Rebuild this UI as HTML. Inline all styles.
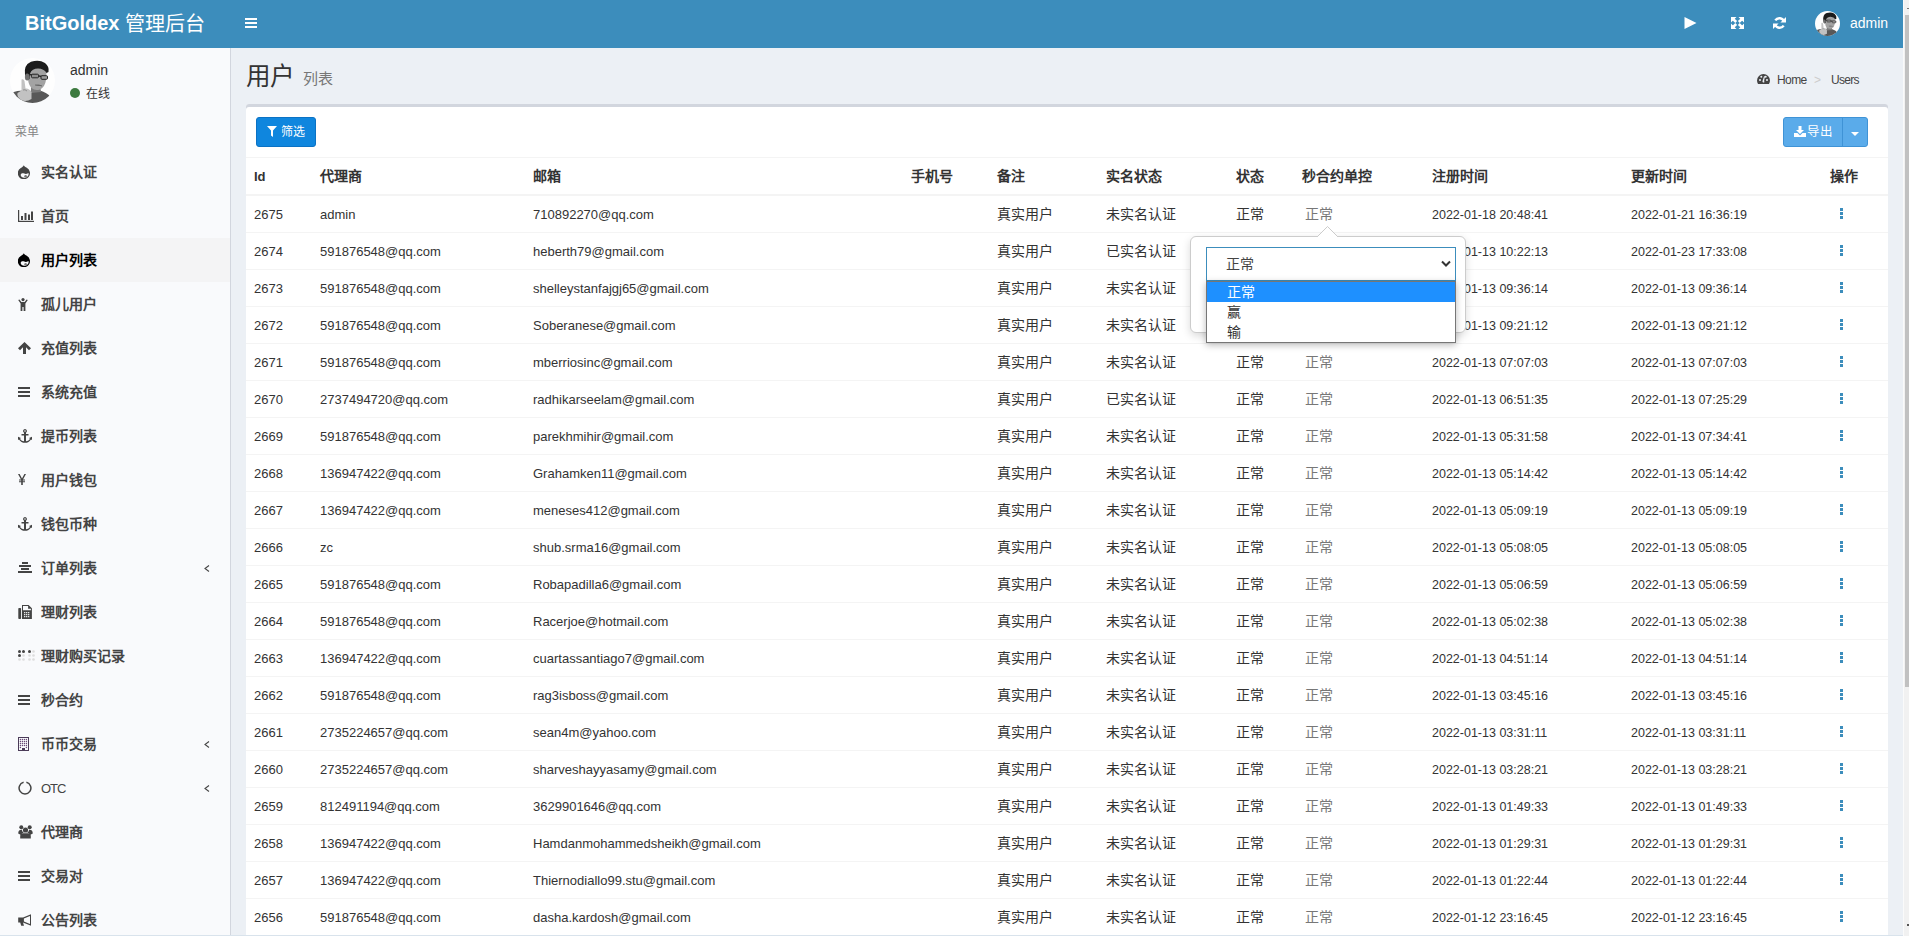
<!DOCTYPE html>
<html lang="zh-CN"><head><meta charset="utf-8"><title>BitGoldex 管理后台</title>
<style>
*{box-sizing:border-box}
html,body{margin:0;padding:0}
body{width:1909px;height:936px;overflow:hidden;position:relative;background:#ecf0f5;font-family:"Liberation Sans",sans-serif;color:#333}
.a{position:absolute}
svg{position:absolute;display:block}
#hdr{position:absolute;left:0;top:0;width:1903px;height:48px;background:#3c8dbc;color:#fff}
#logo{position:absolute;left:25px;top:11px;font-size:20px;line-height:24px;white-space:nowrap}
#logo b{font-weight:bold}
#logo i{font-style:normal;position:relative;top:1px}
#sb{position:absolute;left:0;top:48px;width:231px;height:888px;background:#f9fafc;border-right:1px solid #d2d6de}
.mi{position:absolute;left:0;width:230px;height:44px}
.mi.on{background:#f4f4f5}
.mi.on .t{color:#000}.mi.on svg{fill:#000}
.mi .t{position:absolute;left:41px;top:0;line-height:44px;font-size:14px;font-weight:bold;color:#444;white-space:nowrap}
.mi svg{fill:#444}
#box{position:absolute;left:246px;top:104px;width:1642px;height:840px;background:#fff;border-radius:3px 3px 0 0;box-shadow:inset 0 3px 0 #d2d6de}
.tr{position:absolute;left:0;width:1642px;height:37px;border-top:1px solid #f4f4f4}
.tr span{position:absolute;top:0;white-space:nowrap}
.l{font-size:13px;line-height:36px;color:#333;margin-top:1px}
.z{font-size:14px;line-height:36px;color:#333}
.g{color:#777 !important}
.d{font-size:12.5px}
.th{position:absolute;top:0;font-size:14px;font-weight:bold;line-height:37px;color:#333;white-space:nowrap}
.ev{position:absolute;left:1594px;top:12px;width:3px;height:11px}
.ev:before,.ev:after,.ev b{content:"";position:absolute;left:0;width:3px;height:3px;background:#3c8dbc}
.ev:before{top:0}.ev:after{top:8px}
.ev{background:linear-gradient(#3c8dbc,#3c8dbc) 0 4px/3px 3px no-repeat}
#scr{position:absolute;left:1903px;top:0;width:6px;height:936px;background:#f1f1f1;border-left:1px solid #fafafa}
#thumb{position:absolute;left:1905px;top:15px;width:4px;height:672px;background:#c1c1c1}
</style></head><body>

<!-- header -->
<div id="hdr">
  <div id="logo"><b>BitGoldex</b> <i>管理后台</i></div>
  <svg style="left:245px;top:17px" width="12" height="12" viewBox="0 0 12 12"><rect x="0" y="1" width="12" height="2" fill="#fff"/><rect x="0" y="5" width="12" height="2" fill="#fff"/><rect x="0" y="9" width="12" height="2" fill="#fff"/></svg>
  <svg style="left:1684px;top:17px" width="13" height="12" viewBox="0 0 13 12"><path d="M0.5 0 L12.5 6 L0.5 12 Z" fill="#fff"/></svg>
  <svg style="left:1731px;top:17px" width="13" height="12" viewBox="0 0 13 12" fill="#fff"><path d="M0 0h5.5L0 5.5z M13 0v5.5L7.5 0z M0 12V6.5L5.5 12z M13 12H7.5L13 6.5z"/><path d="M1.5 1.5L5.2 5M11.5 1.5L7.8 5M1.5 10.5L5.2 7M11.5 10.5L7.8 7" stroke="#fff" stroke-width="2.6"/></svg>
  <svg style="left:1773px;top:17px" width="13" height="12" viewBox="0 0 13 12" fill="none" stroke="#fff" stroke-width="2.4"><path d="M11 4.6A4.9 4.9 0 0 0 2.3 3.4"/><path d="M2 7.4A4.9 4.9 0 0 0 10.7 8.6"/><path d="M13 0v5.6H7.4z" fill="#fff" stroke="none"/><path d="M0 12V6.4h5.6z" fill="#fff" stroke="none"/></svg>
  <svg style="left:1815px;top:11px" width="25" height="25" viewBox="0 0 45 45"><use href="#avatar"/></svg>
  <div class="a" style="left:1850px;top:14px;font-size:14px;line-height:18px;color:#fff">admin</div>
</div>
<div id="scr"></div><div id="thumb"></div><div class="a" style="left:1907px;top:8px;width:2px;height:1px;background:#777"></div><div class="a" style="left:1907px;top:924px;width:2px;height:2px;background:#555"></div>

<svg width="0" height="0" style="position:absolute">
 <defs>
  <clipPath id="cc"><circle cx="22.5" cy="22.5" r="22.5"/></clipPath>
  <g id="avatar">
   <g clip-path="url(#cc)">
    <rect width="45" height="45" fill="#fefefe"/>
    <path d="M2 34.5 Q10 31.5 19 33 L30 32.5 Q37 34.5 41 39 L42 45 L2 45Z" fill="#585858"/>
    <path d="M21 27 L30 27 L31 34 L21 35Z" fill="#7a7a7a"/>
    <path d="M18 12 Q19 8 26 8.5 Q35 9 36.5 15 L36 22 Q35 29 30 31.5 Q25 33 21.5 30 Q18.5 27 18 21Z" fill="#a3a3a3"/>
    <path d="M15 17 Q13.5 7 21 3.8 Q29 1 35 5 Q39.5 8.5 38.5 14 L36.5 15 Q34 10.5 28 10.5 Q22 10.5 20 15.5 L19.5 21 L16.5 22Z" fill="#1c1c1c"/>
    <ellipse cx="17.2" cy="19" rx="2.3" ry="3.6" fill="#707070"/>
    <path d="M19.5 16.5 L38 19.5" stroke="#2a2a2a" stroke-width="1.6"/>
    <rect x="21.5" y="16.2" width="7" height="3.6" rx="1" fill="#8f8f8f" stroke="#262626" stroke-width="1"/>
    <rect x="31" y="17.7" width="6.5" height="3.6" rx="1" fill="#9a9a9a" stroke="#262626" stroke-width="1"/>
    <path d="M25 27 Q29 26.5 32 28" stroke="#6a6a6a" stroke-width="1"/>
    <path d="M11.5 21.5 Q13.5 20.5 14.5 23 L15.5 30.5 Q19 30 21.5 34 L21.5 41 Q16 44.5 11 42 Q6.5 38.5 7.5 35 L11.5 32.5 Z" fill="#c2c2c2"/>
    <path d="M13 32 Q15 31 17 33" stroke="#8a8a8a" stroke-width="0.9" fill="none"/>
   </g>
  </g>
  <g id="drupal"><path d="M5.8 0.2 C6.2 1.5 7.6 2.1 8.8 2.8 A6.1 6.1 0 1 1 2.8 2.9 C4 2.2 5.4 1.5 5.8 0.2Z"/><path d="M2.7 10.3 C2.6 8.4 4.6 7.9 6.3 8.6 C7.7 9.2 8.8 8.8 10.5 8 C11 9.6 10.3 11.6 8.2 12.4 C6 13.2 2.9 12.7 2.7 10.3Z" fill="#f9fafc"/><circle cx="7.6" cy="11.3" r="1.3" fill="#777"/></g>
  <g id="bars"><rect x="0" y="0" width="12" height="2"/><rect x="0" y="4" width="12" height="2"/><rect x="0" y="8" width="12" height="2"/></g>
  <g id="anchor"><path d="M7 0a2 2 0 0 1 1 3.7V5h2.5v1.5H8V12.3c1.8-.2 3.3-1.2 4-2.6L11 9l3-1.2V11l-1-.6C11.8 12.4 9.6 13.8 7 13.8S2.2 12.4 1 10.4L0 11V7.8L3 9l-1 .7c.7 1.4 2.2 2.4 4 2.6V6.5H3.5V5H6V3.7A2 2 0 0 1 7 0zm0 1.2a.8.8 0 1 0 0 1.6.8.8 0 0 0 0-1.6z"/></g>
  <g id="angle"><path d="M5 0.5 L1 3.5 L5 6.5" fill="none" stroke="#444" stroke-width="1.1"/></g>
 </defs>
</svg>

<!-- sidebar -->
<div id="sb">
  <svg style="left:10px;top:10px" width="45" height="45" viewBox="0 0 45 45"><use href="#avatar"/></svg>
  <div class="a" style="left:70px;top:13px;font-size:14px;line-height:18px;color:#333">admin</div>
  <div class="a" style="left:70px;top:40px;width:10px;height:10px;border-radius:50%;background:#3d7a3f"></div>
  <div class="a" style="left:86px;top:37px;font-size:12px;line-height:18px;color:#333">在线</div>
  <div class="a" style="left:15px;top:75px;font-size:12px;line-height:18px;color:#848484">菜单</div>
<div class="mi" style="top:102px"><svg style="left:18px;top:15px" width="13" height="14" viewBox="0 0 13 14"><use href="#drupal"/></svg><span class="t">实名认证</span></div>
<div class="mi" style="top:146px"><svg style="left:18px;top:16px" width="16" height="12" viewBox="0 0 16 12"><rect x="0" y="0" width="1.2" height="12"/><rect x="0" y="10.8" width="16" height="1.2"/><rect x="3" y="6" width="2" height="4"/><rect x="6.5" y="3" width="2" height="7"/><rect x="10" y="4.5" width="2" height="5.5"/><rect x="13" y="1.5" width="2" height="8.5"/></svg><span class="t">首页</span></div>
<div class="mi on" style="top:190px"><svg style="left:18px;top:15px" width="13" height="14" viewBox="0 0 13 14"><use href="#drupal"/></svg><span class="t">用户列表</span></div>
<div class="mi" style="top:234px"><svg style="left:18px;top:16px" width="10" height="13" viewBox="0 0 10 13"><circle cx="5" cy="1.6" r="1.6"/><path d="M0.2 2 L1.4 1.4 L3.4 4 H6.6 L8.6 1.4 L9.8 2 L7.4 5.4 V13 H5.6 V9 H4.4 V13 H2.6 V5.4Z"/></svg><span class="t">孤儿用户</span></div>
<div class="mi" style="top:278px"><svg style="left:18px;top:16px" width="13" height="12" viewBox="0 0 13 12"><path d="M6.5 0 L13 6.2 L11 8.2 L8 5.3 V12 H5 V5.3 L2 8.2 L0 6.2Z"/></svg><span class="t">充值列表</span></div>
<div class="mi" style="top:322px"><svg style="left:18px;top:17px" width="12" height="10" viewBox="0 0 12 10"><use href="#bars"/></svg><span class="t">系统充值</span></div>
<div class="mi" style="top:366px"><svg style="left:18px;top:15px" width="14" height="14" viewBox="0 0 14 14"><use href="#anchor"/></svg><span class="t">提币列表</span></div>
<div class="mi" style="top:410px"><svg style="left:18px;top:16px" width="8" height="11" viewBox="0 0 8 11"><path d="M0 0 H1.6 L4 4.6 L6.4 0 H8 L5 5.5 H7 V6.5 H4.8 V7.3 H7 V8.3 H4.8 V11 H3.2 V8.3 H1 V7.3 H3.2 V6.5 H1 V5.5 H3Z"/></svg><span class="t">用户钱包</span></div>
<div class="mi" style="top:454px"><svg style="left:18px;top:15px" width="14" height="14" viewBox="0 0 14 14"><use href="#anchor"/></svg><span class="t">钱包币种</span></div>
<div class="mi" style="top:498px"><svg style="left:18px;top:16px" width="14" height="11" viewBox="0 0 14 11"><rect x="4" y="0" width="6" height="2"/><rect x="1" y="3" width="12" height="2"/><rect x="3" y="6" width="8" height="2"/><rect x="0" y="9" width="14" height="2"/></svg><span class="t">订单列表</span><svg style="left:204px;top:19px" width="6" height="7" viewBox="0 0 6 7"><use href="#angle"/></svg></div>
<div class="mi" style="top:542px"><svg style="left:18px;top:15px" width="14" height="14" viewBox="0 0 14 14"><rect x="0.3" y="3" width="2.8" height="11" rx="0.8"/><path fill-rule="evenodd" d="M4 0 H10.6 L13.9 3.3 V14 H4 Z M5 1 V5.2 H12.9 V3.8 H10.1 V1Z M6.1 7.1 V8.3 H7.3 V7.1Z M8.1 7.1 V8.3 H9.3 V7.1Z M10.1 7.1 V8.3 H11.3 V7.1Z M6.1 9.1 V10.3 H7.3 V9.1Z M8.1 9.1 V10.3 H9.3 V9.1Z M10.1 9.1 V10.3 H11.3 V9.1Z M6.1 11.1 V12.3 H7.3 V11.1Z M8.1 11.1 V12.3 H9.3 V11.1Z M10.1 11.1 V12.3 H11.3 V11.1Z"/></svg><span class="t">理财列表</span></div>
<div class="mi" style="top:586px"><svg style="left:18px;top:15px" width="17" height="13" viewBox="0 0 17 13"><circle cx="1.5" cy="2.5" r="1.5"/><circle cx="5.5" cy="2.5" r="1.5"/><circle cx="11.5" cy="2.5" r="1.5"/><circle cx="1.5" cy="6.5" r="1.5"/><g fill="#ddd"><circle cx="15.5" cy="2.5" r="1.3"/><circle cx="5.5" cy="6.5" r="1.3"/><circle cx="11.5" cy="6.5" r="1.3"/><circle cx="15.5" cy="6.5" r="1.3"/><circle cx="1.5" cy="10.5" r="1.3"/><circle cx="5.5" cy="10.5" r="1.3"/><circle cx="11.5" cy="10.5" r="1.3"/><circle cx="15.5" cy="10.5" r="1.3"/></g></svg><span class="t">理财购买记录</span></div>
<div class="mi" style="top:630px"><svg style="left:18px;top:17px" width="12" height="10" viewBox="0 0 12 10"><use href="#bars"/></svg><span class="t">秒合约</span></div>
<div class="mi" style="top:674px"><svg style="left:18px;top:15px" width="11" height="14" viewBox="0 0 11 14"><path d="M0 0 H11 V14 H0Z M1 1 V13 H4 V11 H7 V13 H10 V1Z" fill="#4b3b58"/><g fill="#6a4a78"><circle cx="2.4" cy="2.5" r=".7"/><circle cx="4.4" cy="2.5" r=".7"/><circle cx="6.4" cy="2.5" r=".7"/><circle cx="8.4" cy="2.5" r=".7"/><circle cx="2.4" cy="4.5" r=".7"/><circle cx="4.4" cy="4.5" r=".7"/><circle cx="6.4" cy="4.5" r=".7"/><circle cx="8.4" cy="4.5" r=".7"/><circle cx="2.4" cy="6.5" r=".7"/><circle cx="4.4" cy="6.5" r=".7"/><circle cx="6.4" cy="6.5" r=".7"/><circle cx="8.4" cy="6.5" r=".7"/><circle cx="2.4" cy="8.5" r=".7"/><circle cx="4.4" cy="8.5" r=".7"/><circle cx="6.4" cy="8.5" r=".7"/><circle cx="8.4" cy="8.5" r=".7"/><circle cx="2.4" cy="10.5" r=".7"/><circle cx="8.4" cy="10.5" r=".7"/></g></svg><span class="t">币币交易</span><svg style="left:204px;top:19px" width="6" height="7" viewBox="0 0 6 7"><use href="#angle"/></svg></div>
<div class="mi" style="top:718px"><svg style="left:18px;top:15px" width="14" height="14" viewBox="0 0 14 14"><path d="M5.6 1.3 A5.9 5.9 0 1 0 8.4 1.3" fill="none" stroke="#444" stroke-width="1.5"/></svg><span class="t" style="font-size:13px;font-weight:normal;letter-spacing:-1px;top:1px">OTC</span><svg style="left:204px;top:19px" width="6" height="7" viewBox="0 0 6 7"><use href="#angle"/></svg></div>
<div class="mi" style="top:762px"><svg style="left:18px;top:15px" width="15" height="14" viewBox="0 0 15 14"><circle cx="3.3" cy="2.2" r="2"/><circle cx="11.7" cy="2.2" r="2"/><circle cx="7.5" cy="5" r="2.6"/><path d="M0.2 8.5 C0.2 5.5 2 4.6 3.8 4.8 C4.3 6.5 5 7.4 5.8 7.8 C3.6 8.4 3 9.6 3 10Z"/><path d="M14.8 8.5 C14.8 5.5 13 4.6 11.2 4.8 C10.7 6.5 10 7.4 9.2 7.8 C11.4 8.4 12 9.6 12 10Z"/><path d="M2.2 13.6 V11 C2.2 9.3 3.4 8.4 5 8.3 H10 C11.6 8.4 12.8 9.3 12.8 11 V13.6Z"/></svg><span class="t">代理商</span></div>
<div class="mi" style="top:806px"><svg style="left:18px;top:17px" width="12" height="10" viewBox="0 0 12 10"><use href="#bars"/></svg><span class="t">交易对</span></div>
<div class="mi" style="top:850px"><svg style="left:18px;top:16px" width="14" height="12" viewBox="0 0 14 12"><path fill-rule="evenodd" d="M0.2 3.5 H5 L13 0.2 V11.8 L5 8.5 L6 11.8 H3.2 L2.2 8.5 H0.2Z M5.9 4.4 V7.6 L12 9.9 V2.1Z"/></svg><span class="t">公告列表</span></div>
</div>

<!-- content -->
<div class="a" style="left:246px;top:62px;font-size:24.5px;line-height:30px;color:#333;white-space:nowrap">用户</div>
<div class="a" style="left:303px;top:70px;font-size:15px;line-height:18px;color:#777;white-space:nowrap">列表</div>
<svg style="left:1757px;top:74px" width="13" height="10" viewBox="0 0 13 10" fill="#444"><path d="M6.5 0A6.5 6.5 0 0 0 0 6.5c0 1.3.4 2.5 1 3.5h11c.6-1 1-2.2 1-3.5A6.5 6.5 0 0 0 6.5 0zM3 7a1 1 0 1 1 0-2 1 1 0 0 1 0 2zm1.3-3.3a1 1 0 1 1 0-2 1 1 0 0 1 0 2zM7.2 8.5a1.3 1.3 0 0 1-1.6-1.8l1.5-4.6.8.3-.8 4.6a1.3 1.3 0 0 1 .1 1.5zM10 7a1 1 0 1 1 0-2 1 1 0 0 1 0 2zM8.7 3.7a1 1 0 1 1 0-2 1 1 0 0 1 0 2z"/></svg>
<div class="a" style="left:1777px;top:72px;font-size:12px;letter-spacing:-0.6px;line-height:16px;color:#444;white-space:nowrap">Home</div>
<div class="a" style="left:1814px;top:72px;font-size:12px;line-height:16px;color:#ccc">&gt;</div>
<div class="a" style="left:1831px;top:72px;font-size:12px;letter-spacing:-0.7px;line-height:16px;color:#444;white-space:nowrap">Users</div>

<div id="box">
  <!-- filter button -->
  <div class="a" style="left:10px;top:13px;width:60px;height:30px;background:#0f86de;border:1px solid #0b72c4;border-radius:3px"></div>
  <svg style="left:21px;top:22px" width="10" height="11" viewBox="0 0 10 11" fill="#fff"><path d="M0 0h10L6 4.5V11L4 9.5V4.5z"/></svg>
  <div class="a" style="left:35px;top:19px;font-size:12px;line-height:18px;color:#fff">筛选</div>
  <!-- export -->
  <div class="a" style="left:1537px;top:13px;width:85px;height:30px;background:#5aabea;border:1px solid #3f93d6;border-radius:3px"></div>
  <div class="a" style="left:1596px;top:13px;width:1px;height:30px;background:#3f93d6"></div>
  <svg style="left:1548px;top:22px" width="12" height="11" viewBox="0 0 12 11" fill="#fff"><path d="M4.5 0h3v4h2.5L6 8 2 4h2.5z"/><path d="M0 7h3.5l2.5 2.5L8.5 7H12v4H0z"/></svg>
  <div class="a" style="left:1561px;top:19px;font-size:12.5px;line-height:18px;color:#fff">导出</div>
  <svg style="left:1605px;top:28px" width="8" height="4" viewBox="0 0 8 4" fill="#fff"><path d="M0 0h8L4 4z"/></svg>

  <div class="a" style="left:0;top:53px;width:1642px;height:1px;background:#f4f4f4"></div>
  <div class="a" style="left:0;top:54px;width:1642px;height:36px">
    <span class="th" style="left:8px;font-size:13px">Id</span>
    <span class="th" style="left:74px">代理商</span>
    <span class="th" style="left:287px">邮箱</span>
    <span class="th" style="left:665px">手机号</span>
    <span class="th" style="left:751px">备注</span>
    <span class="th" style="left:860px">实名状态</span>
    <span class="th" style="left:990px">状态</span>
    <span class="th" style="left:1056px">秒合约单控</span>
    <span class="th" style="left:1186px">注册时间</span>
    <span class="th" style="left:1385px">更新时间</span>
    <span class="th" style="left:1584px">操作</span>
  </div>
  <div class="a" style="left:0;top:90px;width:1642px;height:2px;background:#f4f4f4"></div>
<div class="tr" style="top:91px"><span class="l" style="left:8px">2675</span><span class="l" style="left:74px">admin</span><span class="l" style="left:287px">710892270@qq.com</span><span class="z" style="left:751px">真实用户</span><span class="z" style="left:860px">未实名认证</span><span class="z" style="left:990px">正常</span><span class="z g" style="left:1059px">正常</span><span class="l d" style="left:1186px">2022-01-18 20:48:41</span><span class="l d" style="left:1385px">2022-01-21 16:36:19</span><i class="ev"></i></div>
<div class="tr" style="top:128px"><span class="l" style="left:8px">2674</span><span class="l" style="left:74px">591876548@qq.com</span><span class="l" style="left:287px">heberth79@gmail.com</span><span class="z" style="left:751px">真实用户</span><span class="z" style="left:860px">已实名认证</span><span class="z" style="left:990px">正常</span><span class="z g" style="left:1059px">正常</span><span class="l d" style="left:1186px">2022-01-13 10:22:13</span><span class="l d" style="left:1385px">2022-01-23 17:33:08</span><i class="ev"></i></div>
<div class="tr" style="top:165px"><span class="l" style="left:8px">2673</span><span class="l" style="left:74px">591876548@qq.com</span><span class="l" style="left:287px">shelleystanfajgj65@gmail.com</span><span class="z" style="left:751px">真实用户</span><span class="z" style="left:860px">未实名认证</span><span class="z" style="left:990px">正常</span><span class="z g" style="left:1059px">正常</span><span class="l d" style="left:1186px">2022-01-13 09:36:14</span><span class="l d" style="left:1385px">2022-01-13 09:36:14</span><i class="ev"></i></div>
<div class="tr" style="top:202px"><span class="l" style="left:8px">2672</span><span class="l" style="left:74px">591876548@qq.com</span><span class="l" style="left:287px">Soberanese@gmail.com</span><span class="z" style="left:751px">真实用户</span><span class="z" style="left:860px">未实名认证</span><span class="z" style="left:990px">正常</span><span class="z g" style="left:1059px">正常</span><span class="l d" style="left:1186px">2022-01-13 09:21:12</span><span class="l d" style="left:1385px">2022-01-13 09:21:12</span><i class="ev"></i></div>
<div class="tr" style="top:239px"><span class="l" style="left:8px">2671</span><span class="l" style="left:74px">591876548@qq.com</span><span class="l" style="left:287px">mberriosinc@gmail.com</span><span class="z" style="left:751px">真实用户</span><span class="z" style="left:860px">未实名认证</span><span class="z" style="left:990px">正常</span><span class="z g" style="left:1059px">正常</span><span class="l d" style="left:1186px">2022-01-13 07:07:03</span><span class="l d" style="left:1385px">2022-01-13 07:07:03</span><i class="ev"></i></div>
<div class="tr" style="top:276px"><span class="l" style="left:8px">2670</span><span class="l" style="left:74px">2737494720@qq.com</span><span class="l" style="left:287px">radhikarseelam@gmail.com</span><span class="z" style="left:751px">真实用户</span><span class="z" style="left:860px">已实名认证</span><span class="z" style="left:990px">正常</span><span class="z g" style="left:1059px">正常</span><span class="l d" style="left:1186px">2022-01-13 06:51:35</span><span class="l d" style="left:1385px">2022-01-13 07:25:29</span><i class="ev"></i></div>
<div class="tr" style="top:313px"><span class="l" style="left:8px">2669</span><span class="l" style="left:74px">591876548@qq.com</span><span class="l" style="left:287px">parekhmihir@gmail.com</span><span class="z" style="left:751px">真实用户</span><span class="z" style="left:860px">未实名认证</span><span class="z" style="left:990px">正常</span><span class="z g" style="left:1059px">正常</span><span class="l d" style="left:1186px">2022-01-13 05:31:58</span><span class="l d" style="left:1385px">2022-01-13 07:34:41</span><i class="ev"></i></div>
<div class="tr" style="top:350px"><span class="l" style="left:8px">2668</span><span class="l" style="left:74px">136947422@qq.com</span><span class="l" style="left:287px">Grahamken11@gmail.com</span><span class="z" style="left:751px">真实用户</span><span class="z" style="left:860px">未实名认证</span><span class="z" style="left:990px">正常</span><span class="z g" style="left:1059px">正常</span><span class="l d" style="left:1186px">2022-01-13 05:14:42</span><span class="l d" style="left:1385px">2022-01-13 05:14:42</span><i class="ev"></i></div>
<div class="tr" style="top:387px"><span class="l" style="left:8px">2667</span><span class="l" style="left:74px">136947422@qq.com</span><span class="l" style="left:287px">meneses412@gmail.com</span><span class="z" style="left:751px">真实用户</span><span class="z" style="left:860px">未实名认证</span><span class="z" style="left:990px">正常</span><span class="z g" style="left:1059px">正常</span><span class="l d" style="left:1186px">2022-01-13 05:09:19</span><span class="l d" style="left:1385px">2022-01-13 05:09:19</span><i class="ev"></i></div>
<div class="tr" style="top:424px"><span class="l" style="left:8px">2666</span><span class="l" style="left:74px">zc</span><span class="l" style="left:287px">shub.srma16@gmail.com</span><span class="z" style="left:751px">真实用户</span><span class="z" style="left:860px">未实名认证</span><span class="z" style="left:990px">正常</span><span class="z g" style="left:1059px">正常</span><span class="l d" style="left:1186px">2022-01-13 05:08:05</span><span class="l d" style="left:1385px">2022-01-13 05:08:05</span><i class="ev"></i></div>
<div class="tr" style="top:461px"><span class="l" style="left:8px">2665</span><span class="l" style="left:74px">591876548@qq.com</span><span class="l" style="left:287px">Robapadilla6@gmail.com</span><span class="z" style="left:751px">真实用户</span><span class="z" style="left:860px">未实名认证</span><span class="z" style="left:990px">正常</span><span class="z g" style="left:1059px">正常</span><span class="l d" style="left:1186px">2022-01-13 05:06:59</span><span class="l d" style="left:1385px">2022-01-13 05:06:59</span><i class="ev"></i></div>
<div class="tr" style="top:498px"><span class="l" style="left:8px">2664</span><span class="l" style="left:74px">591876548@qq.com</span><span class="l" style="left:287px">Racerjoe@hotmail.com</span><span class="z" style="left:751px">真实用户</span><span class="z" style="left:860px">未实名认证</span><span class="z" style="left:990px">正常</span><span class="z g" style="left:1059px">正常</span><span class="l d" style="left:1186px">2022-01-13 05:02:38</span><span class="l d" style="left:1385px">2022-01-13 05:02:38</span><i class="ev"></i></div>
<div class="tr" style="top:535px"><span class="l" style="left:8px">2663</span><span class="l" style="left:74px">136947422@qq.com</span><span class="l" style="left:287px">cuartassantiago7@gmail.com</span><span class="z" style="left:751px">真实用户</span><span class="z" style="left:860px">未实名认证</span><span class="z" style="left:990px">正常</span><span class="z g" style="left:1059px">正常</span><span class="l d" style="left:1186px">2022-01-13 04:51:14</span><span class="l d" style="left:1385px">2022-01-13 04:51:14</span><i class="ev"></i></div>
<div class="tr" style="top:572px"><span class="l" style="left:8px">2662</span><span class="l" style="left:74px">591876548@qq.com</span><span class="l" style="left:287px">rag3isboss@gmail.com</span><span class="z" style="left:751px">真实用户</span><span class="z" style="left:860px">未实名认证</span><span class="z" style="left:990px">正常</span><span class="z g" style="left:1059px">正常</span><span class="l d" style="left:1186px">2022-01-13 03:45:16</span><span class="l d" style="left:1385px">2022-01-13 03:45:16</span><i class="ev"></i></div>
<div class="tr" style="top:609px"><span class="l" style="left:8px">2661</span><span class="l" style="left:74px">2735224657@qq.com</span><span class="l" style="left:287px">sean4m@yahoo.com</span><span class="z" style="left:751px">真实用户</span><span class="z" style="left:860px">未实名认证</span><span class="z" style="left:990px">正常</span><span class="z g" style="left:1059px">正常</span><span class="l d" style="left:1186px">2022-01-13 03:31:11</span><span class="l d" style="left:1385px">2022-01-13 03:31:11</span><i class="ev"></i></div>
<div class="tr" style="top:646px"><span class="l" style="left:8px">2660</span><span class="l" style="left:74px">2735224657@qq.com</span><span class="l" style="left:287px">sharveshayyasamy@gmail.com</span><span class="z" style="left:751px">真实用户</span><span class="z" style="left:860px">未实名认证</span><span class="z" style="left:990px">正常</span><span class="z g" style="left:1059px">正常</span><span class="l d" style="left:1186px">2022-01-13 03:28:21</span><span class="l d" style="left:1385px">2022-01-13 03:28:21</span><i class="ev"></i></div>
<div class="tr" style="top:683px"><span class="l" style="left:8px">2659</span><span class="l" style="left:74px">812491194@qq.com</span><span class="l" style="left:287px">3629901646@qq.com</span><span class="z" style="left:751px">真实用户</span><span class="z" style="left:860px">未实名认证</span><span class="z" style="left:990px">正常</span><span class="z g" style="left:1059px">正常</span><span class="l d" style="left:1186px">2022-01-13 01:49:33</span><span class="l d" style="left:1385px">2022-01-13 01:49:33</span><i class="ev"></i></div>
<div class="tr" style="top:720px"><span class="l" style="left:8px">2658</span><span class="l" style="left:74px">136947422@qq.com</span><span class="l" style="left:287px">Hamdanmohammedsheikh@gmail.com</span><span class="z" style="left:751px">真实用户</span><span class="z" style="left:860px">未实名认证</span><span class="z" style="left:990px">正常</span><span class="z g" style="left:1059px">正常</span><span class="l d" style="left:1186px">2022-01-13 01:29:31</span><span class="l d" style="left:1385px">2022-01-13 01:29:31</span><i class="ev"></i></div>
<div class="tr" style="top:757px"><span class="l" style="left:8px">2657</span><span class="l" style="left:74px">136947422@qq.com</span><span class="l" style="left:287px">Thiernodiallo99.stu@gmail.com</span><span class="z" style="left:751px">真实用户</span><span class="z" style="left:860px">未实名认证</span><span class="z" style="left:990px">正常</span><span class="z g" style="left:1059px">正常</span><span class="l d" style="left:1186px">2022-01-13 01:22:44</span><span class="l d" style="left:1385px">2022-01-13 01:22:44</span><i class="ev"></i></div>
<div class="tr" style="top:794px"><span class="l" style="left:8px">2656</span><span class="l" style="left:74px">591876548@qq.com</span><span class="l" style="left:287px">dasha.kardosh@gmail.com</span><span class="z" style="left:751px">真实用户</span><span class="z" style="left:860px">未实名认证</span><span class="z" style="left:990px">正常</span><span class="z g" style="left:1059px">正常</span><span class="l d" style="left:1186px">2022-01-12 23:16:45</span><span class="l d" style="left:1385px">2022-01-12 23:16:45</span><i class="ev"></i></div>
</div>

<!-- popover -->
<div class="a" style="left:1190px;top:236px;width:276px;height:97px;background:#fff;border:1px solid #ccc;border-radius:6px;box-shadow:0 3px 8px rgba(0,0,0,.15)"></div>
<svg style="left:1316px;top:226px" width="24" height="12" viewBox="0 0 24 12"><path d="M0 12 L11.5 0.5 L23 12" fill="#fff" stroke="#ccc" stroke-width="1"/><rect x="0" y="11" width="24" height="2" fill="#fff"/></svg>
<div class="a" style="left:1206px;top:247px;width:250px;height:34px;background:#fff;border:1px solid #3c8dbc"></div>
<div class="a" style="left:1226px;top:254px;font-size:14px;line-height:20px;color:#444">正常</div>
<svg style="left:1441px;top:260px" width="10" height="8" viewBox="0 0 10 8"><path d="M1 1.5 L5 5.5 L9 1.5" fill="none" stroke="#333" stroke-width="2"/></svg>
<div class="a" style="left:1206px;top:281px;width:250px;height:62px;background:#fff;border:1px solid #767676;box-shadow:0 2px 7px rgba(0,0,0,.28)"></div>
<div class="a" style="left:1207px;top:282px;width:248px;height:20px;background:#1e90ff"></div>
<div class="a" style="left:1227px;top:282px;font-size:14px;line-height:20px;color:#fff">正常</div>
<div class="a" style="left:1227px;top:302px;font-size:14px;line-height:20px;color:#333">赢</div>
<div class="a" style="left:1227px;top:322px;font-size:14px;line-height:20px;color:#333">输</div>

<div class="a" style="left:0;top:935px;width:1903px;height:1px;background:#d9e3ec"></div>
</body></html>
